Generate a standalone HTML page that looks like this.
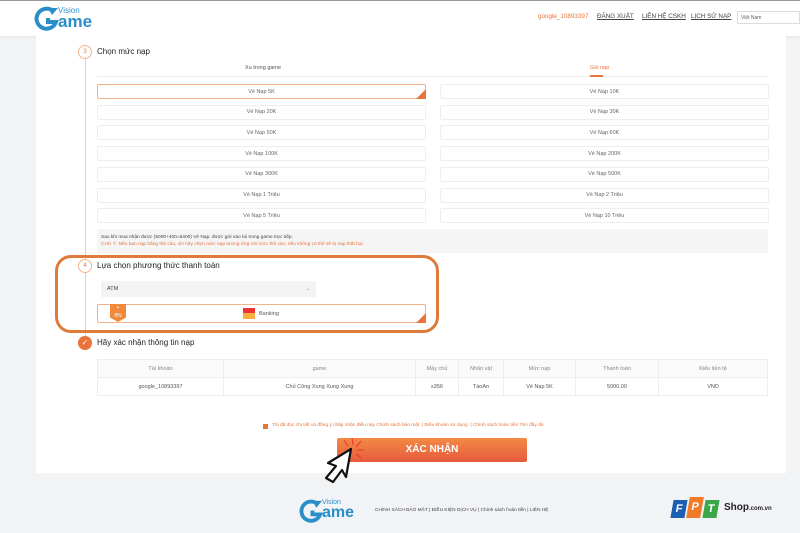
<!DOCTYPE html>
<html><head><meta charset="utf-8">
<style>
*{margin:0;padding:0;box-sizing:border-box}
body{width:800px;height:533px;overflow:hidden;background:#f2f3f5;font-family:"Liberation Sans",sans-serif;position:relative;color:#333}
.abs{position:absolute}
.hdr{left:0;top:0;width:800px;height:36px;background:#fff;border-top:1px solid #999;box-shadow:0 1px 3px rgba(0,0,0,.06)}
.card{left:36px;top:36px;width:750px;height:437px;background:#fff}
.nav{top:13px;font-size:6.3px;color:#444;text-decoration:underline;white-space:nowrap}
.opt{height:15px;border:1px solid #eee;border-radius:2px;font-size:5.5px;color:#666;display:flex;align-items:center;justify-content:center;background:#fff}
.sel{border-color:#f0b08a}
.corner{position:absolute;right:-1px;bottom:-1px;width:0;height:0;border-left:10px solid transparent;border-bottom:10px solid #e8743b}
.num{width:14px;height:14px;border:1px solid #f3b48f;border-radius:50%;background:#fff;font-size:6px;color:#e8743b;display:flex;align-items:center;justify-content:center}
.ttl{font-size:8px;color:#222;white-space:nowrap}
table{border-collapse:collapse;font-size:5.5px;color:#555}
td{border:1px solid #eee;text-align:center;height:18px;vertical-align:middle}
tr:first-child td{background:#fafafa;color:#888}
</style></head><body>
<div class="abs hdr"></div>
<svg class="abs" style="left:34px;top:6px" width="26" height="26" viewBox="0 0 26 26"><path d="M20 6 A10 10 0 1 0 22 16 L14 16 L14 12" fill="none" stroke="#2a8fc9" stroke-width="4"/><path d="M14 2 L24 2 L18 9 Z" fill="#2a8fc9"/></svg>
<div class="abs" style="left:58px;top:6px;font-size:8px;color:#2a8fc9">Vision</div>
<div class="abs" style="left:58px;top:12px;font-size:17px;font-weight:bold;color:#2a8fc9">ame</div>
<div class="abs nav" style="left:538px;color:#e8743b;text-decoration:none">google_10893397</div>
<div class="abs nav" style="left:597px">ĐĂNG XUẤT</div>
<div class="abs nav" style="left:642px">LIÊN HỆ CSKH</div>
<div class="abs nav" style="left:691px">LỊCH SỬ NẠP</div>
<div class="abs" style="left:737px;top:11px;width:63px;height:13px;border:1px solid #ddd;font-size:5px;color:#666;padding:3px 3px">Việt Nam</div>
<div class="abs card"></div>
<div class="abs" style="left:85px;top:50px;width:1px;height:290px;background:#f3c9b0"></div>
<div class="abs num" style="left:78px;top:45px">3</div>
<div class="abs ttl" style="left:97px;top:47px">Chọn mức nạp</div>
<div class="abs" style="left:97px;top:76px;width:671px;height:1px;background:#eee"></div>
<div class="abs" style="left:245px;top:65px;font-size:5.5px;color:#555">Xu trong game</div>
<div class="abs" style="left:590px;top:65px;font-size:5.5px;color:#e8743b">Gói nạp</div>
<div class="abs" style="left:590px;top:75px;width:13px;height:2px;background:#e8743b"></div>
<div id="opts"></div>
<div class="abs" style="left:97px;top:229px;width:671px;height:24px;background:#f5f5f5;font-size:4.8px;padding:5px 4px;line-height:7px;color:#444">Sau khi mua nhận được (5000+400=5400) Vé Nạp, được gửi vào túi trong game trực tiếp.<br><span style="color:#e8743b">CHÚ Ý: Nếu bạn nạp bằng thẻ cào, xin hãy chọn mức nạp tương ứng với mức thẻ cào, nếu không có thể sẽ bị nạp thất bại.</span></div>
<div class="abs" style="left:55px;top:255px;width:384px;height:78px;border:3px solid #e07a3b;border-radius:16px"></div>
<div class="abs num" style="left:78px;top:259px">4</div>
<div class="abs ttl" style="left:97px;top:261px">Lựa chọn phương thức thanh toán</div>
<div class="abs" style="left:101px;top:281px;width:215px;height:16px;background:#f3f3f3;font-size:5.5px;color:#444;padding:5px 6px">ATM<span style="float:right;color:#999">⌄</span></div>
<div class="abs opt sel" style="left:97px;top:304px;width:329px;height:19px"><span class="corner"></span></div>
<div class="abs" style="left:110px;top:304px;width:16px;height:18px;background:#f08a3a;clip-path:polygon(0 0,100% 0,100% 75%,50% 100%,0 75%);color:#fff;font-size:5px;text-align:center;line-height:8px">+<br>8%</div>
<div class="abs" style="left:243px;top:308px;width:12px;height:11px;background:linear-gradient(#e33 0 45%,#f7b040 45%)"></div>
<div class="abs" style="left:259px;top:311px;font-size:5.5px;color:#555">Banking</div>
<div class="abs" style="left:78px;top:336px;width:14px;height:14px;border-radius:50%;background:#e8743b;color:#fff;font-size:8px;text-align:center;line-height:14px">✓</div>
<div class="abs ttl" style="left:97px;top:338px">Hãy xác nhận thông tin nạp</div>
<table class="abs" style="left:97px;top:359px;width:671px">
<tr><td style="width:126px">Tài khoản</td><td style="width:192px">game</td><td style="width:43px">Máy chủ</td><td style="width:45px">Nhân vật</td><td style="width:72px">Mức nạp</td><td style="width:83px">Thanh toán</td><td>Kiểu tiền tệ</td></tr>
<tr><td>google_10893397</td><td>Chủ Công Xung Xung Xung</td><td>s356</td><td>TáoAn</td><td>Vé Nạp 5K</td><td>5000.00</td><td>VND</td></tr>
</table>
<div class="abs" style="left:263px;top:424px;width:5px;height:5px;background:#e8743b"></div>
<div class="abs" style="left:272px;top:423px;font-size:4.8px;color:#e8743b;white-space:nowrap">Tôi đã đọc chi tiết và đồng ý chấp nhận điều này Chính sách bảo mật &nbsp;| Điều khoản sử dụng &nbsp;| Chính sách hoàn tiền Tên đầy đủ</div>
<div class="abs" style="left:337px;top:438px;width:190px;height:24px;border-radius:2px;background:linear-gradient(#f38a44,#e65a3e);color:#fff;font-size:10px;font-weight:bold;text-align:center;line-height:24px">XÁC NHẬN</div>
<div class="abs" style="left:0;top:473px;width:800px;height:17px;background:#f2f3f5"></div>
<div class="abs" style="left:0;top:490px;width:800px;height:43px;background:#f1f3f6"></div>
<svg class="abs" style="left:299px;top:499px" width="25" height="25" viewBox="0 0 26 26"><path d="M20 6 A10 10 0 1 0 22 16 L14 16 L14 12" fill="none" stroke="#2a8fc9" stroke-width="4"/><path d="M14 2 L24 2 L18 9 Z" fill="#2a8fc9"/></svg>
<div class="abs" style="left:322px;top:499px;font-size:7px;color:#2a8fc9">Vision</div>
<div class="abs" style="left:322px;top:504px;font-size:16px;font-weight:bold;color:#2a8fc9">ame</div>
<div class="abs" style="left:375px;top:508px;font-size:4.8px;color:#444;white-space:nowrap">CHÍNH SÁCH BẢO MẬT | ĐIỀU KIỆN DỊCH VỤ | Chính sách hoàn tiền | LIÊN HỆ</div>
<div class="abs" style="left:672px;top:500px;width:14px;height:18px;background:#1c5fb0;transform:skewX(-10deg);color:#fff;font-weight:bold;font-size:11px;text-align:center;line-height:18px">F</div>
<div class="abs" style="left:688px;top:497px;width:14px;height:21px;background:#f07a28;transform:skewX(-10deg);color:#fff;font-weight:bold;font-size:11px;text-align:center;line-height:21px">P</div>
<div class="abs" style="left:704px;top:500px;width:14px;height:18px;background:#3aa84a;transform:skewX(-10deg);color:#fff;font-weight:bold;font-size:11px;text-align:center;line-height:18px">T</div>
<div class="abs" style="left:724px;top:502px;font-size:10px;font-weight:bold;color:#222">Shop<span style="font-size:6px">.com.vn</span></div>
<svg class="abs" style="left:320px;top:436px" width="50" height="48" viewBox="0 0 50 48"><path d="M31 13 L8 27 L16 30 L6 42 L13 46 L22 34 L26 41 Z" fill="#fff" stroke="#111" stroke-width="2.2" stroke-linejoin="round"/><g stroke="#e33" stroke-width="1"><path d="M32 2 L33 9"/><path d="M41 5 L36 11"/><path d="M44 14 L37 14"/><path d="M41 22 L36 18"/><path d="M24 4 L28 10"/></g></svg>
<script>
var L=["Vé Nạp 5K","Vé Nạp 20K","Vé Nạp 50K","Vé Nạp 100K","Vé Nạp 300K","Vé Nạp 1 Triệu","Vé Nạp 5 Triệu"],R=["Vé Nạp 10K","Vé Nạp 30K","Vé Nạp 60K","Vé Nạp 200K","Vé Nạp 500K","Vé Nạp 2 Triệu","Vé Nạp 10 Triệu"],h="";
for(var i=0;i<7;i++){var y=84+i*20.7;h+='<div class="abs opt'+(i==0?' sel':'')+'" style="left:97px;top:'+y+'px;width:329px">'+L[i]+(i==0?'<span class="corner"></span>':'')+'</div><div class="abs opt" style="left:440px;top:'+y+'px;width:329px">'+R[i]+'</div>';}
document.getElementById("opts").innerHTML=h;
</script>
</body></html>
